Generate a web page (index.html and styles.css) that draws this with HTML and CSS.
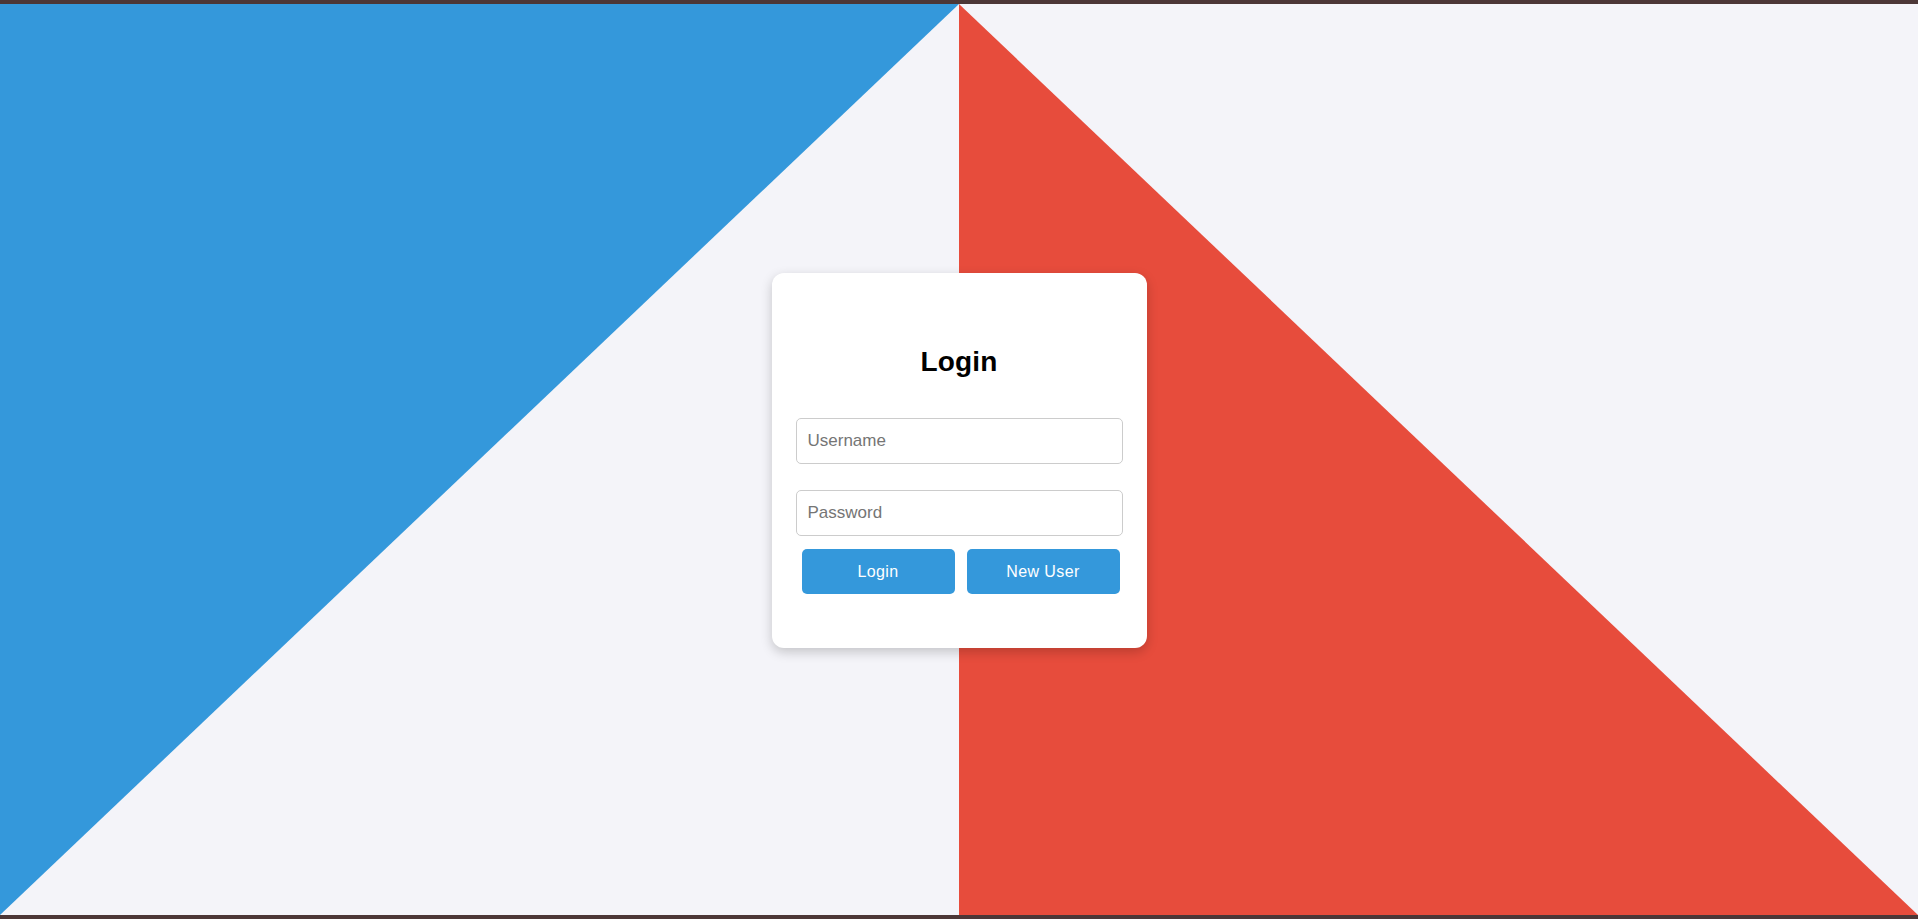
FILE: index.html
```html
<!DOCTYPE html>
<html lang="en">
<head>
<meta charset="utf-8">
<title>Login</title>
<link rel="stylesheet" href="styles.css">
</head>
<body>
<div class="page">
  <div class="edge"></div>
  <main class="stage">
    <form class="card">
      <h2 class="title">Login</h2>
      <input class="field" type="text" placeholder="Username">
      <input class="field field-second" type="password" placeholder="Password">
      <div class="actions">
        <button type="button" class="btn">Login</button>
        <button type="button" class="btn">New User</button>
      </div>
    </form>
  </main>
  <div class="edge"></div>
</div>
</body>
</html>
```

FILE: styles.css
```css
html, body {
  margin: 0;
  padding: 0;
  height: 100%;
}

body {
  font-family: "Liberation Sans", Arial, sans-serif;
  background: #4c3737;
  overflow: hidden;
}

.page {
  display: flex;
  flex-direction: column;
  height: 100vh;
}

.edge {
  height: 4px;
  flex: 0 0 4px;
  background: #4c3737;
}

.stage {
  position: relative;
  flex: 1;
  display: flex;
  align-items: center;
  justify-content: center;
  background-color: #f4f4f9;
}

.stage::before,
.stage::after {
  content: "";
  position: absolute;
  top: 0;
  bottom: 0;
  z-index: 0;
}

.stage::before {
  left: 0;
  width: 50%;
  background: #3498db;
  clip-path: polygon(0 0, 100% 0, 0 100%);
}

.stage::after {
  right: 0;
  width: 50%;
  background: #e74c3c;
  clip-path: polygon(0 0, 100% 100%, 0 100%);
}

.card {
  position: relative;
  z-index: 1;
  box-sizing: border-box;
  width: 375px;
  padding: 73px 24px 54px;
  background: #ffffff;
  border-radius: 12px;
  box-shadow: 0 4px 12px rgba(0, 0, 0, 0.2);
  display: flex;
  flex-direction: column;
  margin-top: 2px;
}

.title {
  margin: 0 0 40px;
  font-size: 28px;
  line-height: 32px;
  font-weight: bold;
  text-align: center;
  color: #000;
  letter-spacing: 0.2px;
}

.field {
  box-sizing: border-box;
  width: 100%;
  height: 46px;
  margin: 0;
  padding: 0 11px;
  border: 1px solid #cccccc;
  border-radius: 5px;
  font-family: "Liberation Sans", Arial, sans-serif;
  font-size: 17px;
  color: #333;
  background: #fff;
  outline: none;
}

.field::placeholder {
  color: #757575;
}

.field-second {
  margin-top: 26px;
}

.actions {
  display: flex;
  gap: 12px;
  margin-top: 13px;
  padding-left: 6px;
}

.btn {
  width: 153px;
  height: 45px;
  margin: 0;
  padding: 0;
  border: none;
  border-radius: 5px;
  background: #3498db;
  color: #ffffff;
  font-family: "Liberation Sans", Arial, sans-serif;
  font-size: 16px;
  letter-spacing: 0.4px;
  cursor: pointer;
}
```
